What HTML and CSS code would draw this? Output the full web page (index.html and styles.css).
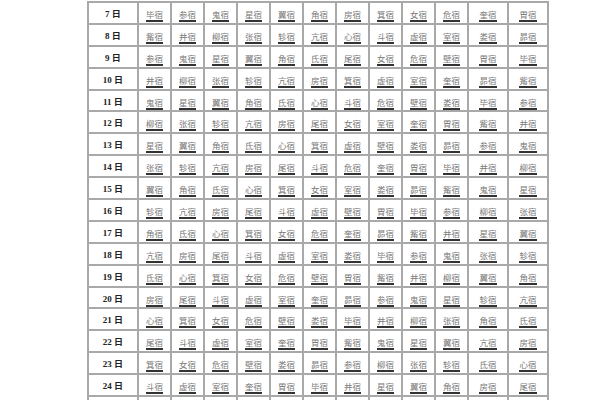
FILE: index.html
```html
<!DOCTYPE html>
<html lang="zh">
<head>
<meta charset="utf-8">
<link rel="stylesheet" href="styles.css">
</head>
<body>
<div class="page">
<table class="xiu">
<colgroup><col class="c-day"><col class="c"><col class="c"><col class="c"><col class="c"><col class="c"><col class="c"><col class="c"><col class="c"><col class="c"><col class="c"><col class="c-w"><col class="c-w"></colgroup>
<tbody>
<tr><th>7 日</th><td><a>毕宿</a></td><td><a>参宿</a></td><td><a>鬼宿</a></td><td><a>星宿</a></td><td><a>翼宿</a></td><td><a>角宿</a></td><td><a>房宿</a></td><td><a>箕宿</a></td><td><a>女宿</a></td><td><a>危宿</a></td><td><a>奎宿</a></td><td><a>胃宿</a></td></tr>
<tr><th>8 日</th><td><a>觜宿</a></td><td><a>井宿</a></td><td><a>柳宿</a></td><td><a>张宿</a></td><td><a>轸宿</a></td><td><a>亢宿</a></td><td><a>心宿</a></td><td><a>斗宿</a></td><td><a>虚宿</a></td><td><a>室宿</a></td><td><a>娄宿</a></td><td><a>昴宿</a></td></tr>
<tr><th>9 日</th><td><a>参宿</a></td><td><a>鬼宿</a></td><td><a>星宿</a></td><td><a>翼宿</a></td><td><a>角宿</a></td><td><a>氐宿</a></td><td><a>尾宿</a></td><td><a>女宿</a></td><td><a>危宿</a></td><td><a>壁宿</a></td><td><a>胃宿</a></td><td><a>毕宿</a></td></tr>
<tr><th>10 日</th><td><a>井宿</a></td><td><a>柳宿</a></td><td><a>张宿</a></td><td><a>轸宿</a></td><td><a>亢宿</a></td><td><a>房宿</a></td><td><a>箕宿</a></td><td><a>虚宿</a></td><td><a>室宿</a></td><td><a>奎宿</a></td><td><a>昴宿</a></td><td><a>觜宿</a></td></tr>
<tr><th>11 日</th><td><a>鬼宿</a></td><td><a>星宿</a></td><td><a>翼宿</a></td><td><a>角宿</a></td><td><a>氐宿</a></td><td><a>心宿</a></td><td><a>斗宿</a></td><td><a>危宿</a></td><td><a>壁宿</a></td><td><a>娄宿</a></td><td><a>毕宿</a></td><td><a>参宿</a></td></tr>
<tr><th>12 日</th><td><a>柳宿</a></td><td><a>张宿</a></td><td><a>轸宿</a></td><td><a>亢宿</a></td><td><a>房宿</a></td><td><a>尾宿</a></td><td><a>女宿</a></td><td><a>室宿</a></td><td><a>奎宿</a></td><td><a>胃宿</a></td><td><a>觜宿</a></td><td><a>井宿</a></td></tr>
<tr><th>13 日</th><td><a>星宿</a></td><td><a>翼宿</a></td><td><a>角宿</a></td><td><a>氐宿</a></td><td><a>心宿</a></td><td><a>箕宿</a></td><td><a>虚宿</a></td><td><a>壁宿</a></td><td><a>娄宿</a></td><td><a>昴宿</a></td><td><a>参宿</a></td><td><a>鬼宿</a></td></tr>
<tr><th>14 日</th><td><a>张宿</a></td><td><a>轸宿</a></td><td><a>亢宿</a></td><td><a>房宿</a></td><td><a>尾宿</a></td><td><a>斗宿</a></td><td><a>危宿</a></td><td><a>奎宿</a></td><td><a>胃宿</a></td><td><a>毕宿</a></td><td><a>井宿</a></td><td><a>柳宿</a></td></tr>
<tr><th>15 日</th><td><a>翼宿</a></td><td><a>角宿</a></td><td><a>氐宿</a></td><td><a>心宿</a></td><td><a>箕宿</a></td><td><a>女宿</a></td><td><a>室宿</a></td><td><a>娄宿</a></td><td><a>昴宿</a></td><td><a>觜宿</a></td><td><a>鬼宿</a></td><td><a>星宿</a></td></tr>
<tr><th>16 日</th><td><a>轸宿</a></td><td><a>亢宿</a></td><td><a>房宿</a></td><td><a>尾宿</a></td><td><a>斗宿</a></td><td><a>虚宿</a></td><td><a>壁宿</a></td><td><a>胃宿</a></td><td><a>毕宿</a></td><td><a>参宿</a></td><td><a>柳宿</a></td><td><a>张宿</a></td></tr>
<tr><th>17 日</th><td><a>角宿</a></td><td><a>氐宿</a></td><td><a>心宿</a></td><td><a>箕宿</a></td><td><a>女宿</a></td><td><a>危宿</a></td><td><a>奎宿</a></td><td><a>昴宿</a></td><td><a>觜宿</a></td><td><a>井宿</a></td><td><a>星宿</a></td><td><a>翼宿</a></td></tr>
<tr><th>18 日</th><td><a>亢宿</a></td><td><a>房宿</a></td><td><a>尾宿</a></td><td><a>斗宿</a></td><td><a>虚宿</a></td><td><a>室宿</a></td><td><a>娄宿</a></td><td><a>毕宿</a></td><td><a>参宿</a></td><td><a>鬼宿</a></td><td><a>张宿</a></td><td><a>轸宿</a></td></tr>
<tr><th>19 日</th><td><a>氐宿</a></td><td><a>心宿</a></td><td><a>箕宿</a></td><td><a>女宿</a></td><td><a>危宿</a></td><td><a>壁宿</a></td><td><a>胃宿</a></td><td><a>觜宿</a></td><td><a>井宿</a></td><td><a>柳宿</a></td><td><a>翼宿</a></td><td><a>角宿</a></td></tr>
<tr><th>20 日</th><td><a>房宿</a></td><td><a>尾宿</a></td><td><a>斗宿</a></td><td><a>虚宿</a></td><td><a>室宿</a></td><td><a>奎宿</a></td><td><a>昴宿</a></td><td><a>参宿</a></td><td><a>鬼宿</a></td><td><a>星宿</a></td><td><a>轸宿</a></td><td><a>亢宿</a></td></tr>
<tr><th>21 日</th><td><a>心宿</a></td><td><a>箕宿</a></td><td><a>女宿</a></td><td><a>危宿</a></td><td><a>壁宿</a></td><td><a>娄宿</a></td><td><a>毕宿</a></td><td><a>井宿</a></td><td><a>柳宿</a></td><td><a>张宿</a></td><td><a>角宿</a></td><td><a>氐宿</a></td></tr>
<tr><th>22 日</th><td><a>尾宿</a></td><td><a>斗宿</a></td><td><a>虚宿</a></td><td><a>室宿</a></td><td><a>奎宿</a></td><td><a>胃宿</a></td><td><a>觜宿</a></td><td><a>鬼宿</a></td><td><a>星宿</a></td><td><a>翼宿</a></td><td><a>亢宿</a></td><td><a>房宿</a></td></tr>
<tr><th>23 日</th><td><a>箕宿</a></td><td><a>女宿</a></td><td><a>危宿</a></td><td><a>壁宿</a></td><td><a>娄宿</a></td><td><a>昴宿</a></td><td><a>参宿</a></td><td><a>柳宿</a></td><td><a>张宿</a></td><td><a>轸宿</a></td><td><a>氐宿</a></td><td><a>心宿</a></td></tr>
<tr><th>24 日</th><td><a>斗宿</a></td><td><a>虚宿</a></td><td><a>室宿</a></td><td><a>奎宿</a></td><td><a>胃宿</a></td><td><a>毕宿</a></td><td><a>井宿</a></td><td><a>星宿</a></td><td><a>翼宿</a></td><td><a>角宿</a></td><td><a>房宿</a></td><td><a>尾宿</a></td></tr>
<tr class="next"><th></th><td></td><td></td><td></td><td></td><td></td><td></td><td></td><td></td><td></td><td></td><td></td><td></td></tr>
</tbody>
</table>
</div>
</body>
</html>
```
FILE: styles.css
```css
html, body {
  margin: 0;
  padding: 0;
  background: #ffffff;
  overflow: hidden;
}
.page {
  padding-left: 87px;
  padding-top: 1px;
  height: 400px;
  overflow: hidden;
  box-sizing: border-box;
}
.xiu {
  border-collapse: collapse;
  table-layout: fixed;
  width: 461px;
  font-family: "Liberation Serif", "Noto Sans CJK SC", serif;
}
.c-day { width: 50px; }
.c { width: 33px; }
.c-w { width: 40px; }
.xiu th, .xiu td {
  border: 2px solid #a9a9a9;
  height: 21.9px;
  padding: 0;
  text-align: center;
  vertical-align: middle;
  box-sizing: border-box;
}
.xiu th {
  font-size: 9px;
  font-weight: bold;
  color: #222;
  padding-top: 1px;
}
.xiu td a {
  display: inline-block;
  font-family: "Noto Sans CJK SC", serif;
  font-size: 8.5px;
  line-height: 9px;
  color: #7a7a7a;
  border-bottom: 2px solid #333;
  padding-bottom: 1px;
  margin-top: 2px;
}
```
